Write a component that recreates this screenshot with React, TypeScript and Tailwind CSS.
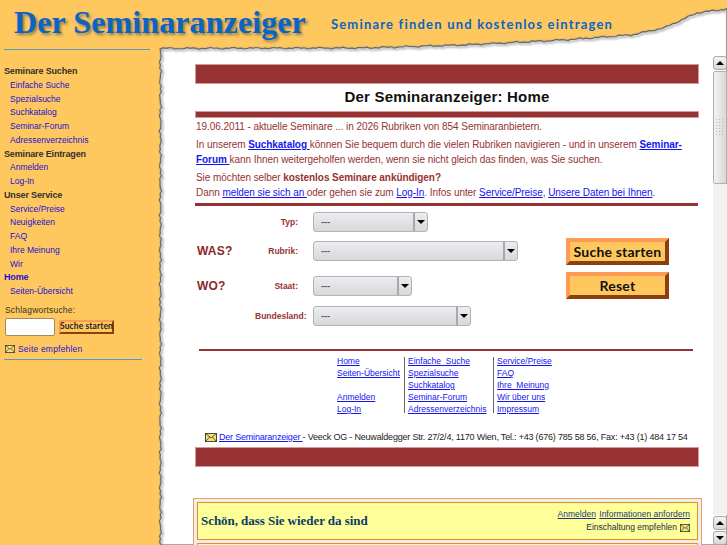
const keys: [number, number][] = [[160,48.5],[364,48],[464,45],[564,40],[631,35],[664,28],[697,13],[727,9]];

function topY(x: number) {
  for (let i = 0; i < keys.length - 1; i++) {
    const [a, b] = keys[i];
    const [c, d] = keys[i + 1];
    if (x <= c) return b + ((d - b) * (x - a)) / (c - a);
  }
  return 9;
}

function buildPath() {
  const pts: string[] = [];
  for (let y = 545; y > 49; y -= 3) {
    const n = Math.sin(y * 0.9) * 0.7 + Math.sin(y * 0.37) * 0.6;
    pts.push(`${(160.5 + n).toFixed(1)},${y}`);
  }
  for (let x = 160; x <= 727; x += 3) {
    const n = Math.sin(x * 0.8) * 0.5 + Math.sin(x * 0.29) * 0.5;
    pts.push(`${x},${(topY(x) + n).toFixed(1)}`);
  }
  pts.push("727,545");
  return "M" + pts.join(" L") + " Z";
}
const wave = buildPath();

function Envelope({ w = 12, h = 9 }: { w?: number; h?: number }) {
  return (
    <svg width={w} height={h} viewBox="0 0 13 10" preserveAspectRatio="none" className="shrink-0">
      <rect x="0.5" y="0.5" width="12" height="9" fill="#f6e27a" stroke="#3a3a2a" />
      <path d="M0.5 0.5 L6.5 5.5 L12.5 0.5 M0.5 9.5 L5 4.5 M12.5 9.5 L8 4.5" fill="none" stroke="#3a3a2a" strokeWidth="0.9" />
    </svg>
  );
}

function SideHead({ children, blue }: { children: React.ReactNode; blue?: boolean }) {
  return (
    <div className={`h-[13.75px] leading-[13.75px] pl-[4px] text-[9px] font-bold tracking-[-0.15px] ${blue ? "text-[#1c10d0]" : "text-[#33302a]"}`}>
      {children}
    </div>
  );
}

function SideLink({ children }: { children: React.ReactNode }) {
  return <div className="h-[13.75px] leading-[13.75px] pl-[10px] text-[8.5px] text-[#1c10d0]">{children}</div>;
}

function Sidebar() {
  return (
    <div className="w-[160px] shrink-0 font-['Liberation_Sans',sans-serif]">
      <div className="ml-[4px] mt-[1px] w-[146px] h-px bg-[#4f9cc0]" />
      <div className="mt-[15px]">
        <SideHead>Seminare Suchen</SideHead>
        <SideLink>Einfache Suche</SideLink>
        <SideLink>Spezialsuche</SideLink>
        <SideLink>Suchkatalog</SideLink>
        <SideLink>Seminar-Forum</SideLink>
        <SideLink>Adressenverzeichnis</SideLink>
        <SideHead>Seminare Eintragen</SideHead>
        <SideLink>Anmelden</SideLink>
        <SideLink>Log-In</SideLink>
        <SideHead>Unser Service</SideHead>
        <SideLink>Service/Preise</SideLink>
        <SideLink>Neuigkeiten</SideLink>
        <SideLink>FAQ</SideLink>
        <SideLink>Ihre Meinung</SideLink>
        <SideLink>Wir</SideLink>
        <SideHead blue>Home</SideHead>
        <SideLink>Seiten-Übersicht</SideLink>
      </div>
      <div className="mt-[5px] ml-[5px] text-[8.5px] leading-[13px] text-[#33302a] tracking-[0.2px]">Schlagwortsuche:</div>
      <div className="mt-[1px] ml-[5px] flex items-center gap-[4px]">
        <div className="w-[50px] h-[18px] bg-white rounded-[2px] border border-[#a08a60]" />
        <div className="w-[55px] h-[14px] flex items-center justify-center bg-[#ffc85f] border-2 border-t-[#ff9a55] border-l-[#ff9a55] border-r-[#8c4010] border-b-[#8c4010] text-[8.5px] font-bold font-['Lato',sans-serif] text-[#222] tracking-[0.1px] whitespace-nowrap">
          Suche starten
        </div>
      </div>
      <div className="mt-[7px] ml-[5px] flex items-center gap-[3px] text-[8.5px] leading-[12px] text-[#1c10d0] tracking-[0.2px]">
        <Envelope w={10} h={8} />
        <span>Seite empfehlen</span>
      </div>
      <div className="ml-[4px] mt-[4px] w-[138px] h-px bg-[#4f9cc0]" />
    </div>
  );
}

function Select({ width }: { width: string }) {
  return (
    <div className={`${width} h-[20px] flex rounded-[3px] border border-[#b4b4b4] bg-gradient-to-b from-[#ecedf0] to-[#d8d8dc]`}>
      <div className="flex-1 pl-[7px] text-[9px] leading-[18px] font-bold text-[#555]">---</div>
      <div className="w-[14px] border-l-2 border-[#a8a8a8] flex items-center justify-center">
        <span className="w-0 h-0 border-l-[4px] border-r-[4px] border-t-[4px] border-l-transparent border-r-transparent border-t-black" />
      </div>
    </div>
  );
}

function FormRow({ big, label, width, top }: { big?: string; label: string; width: string; top: string }) {
  return (
    <div className={`${top} flex items-center h-[20px]`}>
      <div className="w-[60px] pl-[2px] text-[12px] font-bold text-[#8a2a2a] tracking-[0.2px]">{big}</div>
      <div className="w-[43px] text-right text-[8.5px] font-bold text-[#963232] whitespace-nowrap">{label}</div>
      <div className="w-[15px]" />
      <Select width={width} />
    </div>
  );
}

function BevelButton({ children }: { children: React.ReactNode }) {
  return (
    <div className="w-[103px] h-[27px] flex items-center justify-center bg-[#ffc85f] border-[4px] border-t-[#ff9a55] border-l-[#ff9a55] border-r-[#8c4010] border-b-[#8c4010] text-[14px] font-bold font-['Lato',sans-serif] text-[#111] tracking-[0.2px]">
      {children}
    </div>
  );
}

function Lnk({ children, bold }: { children: React.ReactNode; bold?: boolean }) {
  return <a className={`text-[#1414f0] underline ${bold ? "font-bold" : ""}`}>{children}</a>;
}

function FootLink({ children }: { children?: React.ReactNode }) {
  return (
    <div className="h-[12px] leading-[12px] text-[8.5px] whitespace-nowrap text-[#1414f0] underline">{children}</div>
  );
}

function Bar({ h, mt }: { h: string; mt?: string }) {
  return <div className={`${h} ${mt ?? ""} w-[504px] bg-[#963232] border border-[#d49a9a]`} />;
}

function Main() {
  return (
    <div className="flex-1 min-w-0 pl-[35px] pt-[16px] font-['Liberation_Sans',sans-serif]">
      <Bar h="h-[20px]" />
      <div className="h-[27px] w-[504px] flex items-center justify-center text-[15px] font-bold text-[#111] tracking-[0.2px]">
        Der Seminaranzeiger: Home
      </div>
      <Bar h="h-[7px]" />
      <div className="mt-[1px] pl-[1px] w-[504px] text-[10px] leading-[15px] text-[#963232] tracking-[-0.06px] whitespace-nowrap">
        <div>19.06.2011 - aktuelle Seminare ... in 2026 Rubriken von 854 Seminaranbietern.</div>
        <div className="mt-[3px]">
          In unserem <Lnk bold>Suchkatalog </Lnk> können Sie bequem durch die vielen Rubriken navigieren - und in unserem <Lnk bold>Seminar-</Lnk>
          <br />
          <Lnk bold>Forum </Lnk> kann Ihnen weitergeholfen werden, wenn sie nicht gleich das finden, was Sie suchen.
        </div>
        <div className="mt-[3px]">
          Sie möchten selber <b>kostenlos Seminare ankündigen?</b>
          <br />
          Dann <Lnk>melden sie sich an </Lnk> oder gehen sie zum <Lnk>Log-In</Lnk>. Infos unter <Lnk>Service/Preise</Lnk>, <Lnk>Unsere Daten bei Ihnen</Lnk>.
        </div>
      </div>
      <div className="mt-[3px] w-[503px] h-[3px] bg-[#963232]" />
      <div className="flex">
        <div className="w-[371px]">
          <FormRow label="Typ:" width="w-[115px]" top="mt-[6px]" />
          <FormRow big="WAS?" label="Rubrik:" width="w-[205px]" top="mt-[9px]" />
          <FormRow big="WO?" label="Staat:" width="w-[99px]" top="mt-[15px]" />
          <FormRow label="Bundesland:" width="w-[158px]" top="mt-[10px]" />
        </div>
        <div className="pt-[32px] flex flex-col gap-[7px]">
          <BevelButton>Suche starten</BevelButton>
          <BevelButton>Reset</BevelButton>
        </div>
      </div>
      <div className="mt-[23px] ml-[4px] w-[494px] h-[2px] bg-[#963232]" />
      <div className="mt-[4px] ml-[142px] flex h-[60px]">
        <div className="w-[67px]">
          <FootLink>Home</FootLink>
          <FootLink>Seiten-Übersicht</FootLink>
          <div className="h-[12px]" />
          <FootLink>Anmelden</FootLink>
          <FootLink>Log-In</FootLink>
        </div>
        <div className="w-[4px] h-[56px] mt-[2px]">
          <div className="w-px h-full bg-[#666]" />
        </div>
        <div className="w-[85px]">
          <FootLink>Einfache_Suche</FootLink>
          <FootLink>Spezialsuche</FootLink>
          <FootLink>Suchkatalog</FootLink>
          <FootLink>Seminar-Forum</FootLink>
          <FootLink>Adressenverzeichnis</FootLink>
        </div>
        <div className="w-[4px] h-[56px] mt-[2px]">
          <div className="w-px h-full bg-[#666]" />
        </div>
        <div>
          <FootLink>Service/Preise</FootLink>
          <FootLink>FAQ</FootLink>
          <FootLink>Ihre_Meinung</FootLink>
          <FootLink>Wir über uns</FootLink>
          <FootLink>Impressum</FootLink>
        </div>
      </div>
      <div className="mt-[16px] ml-[10px] flex items-center gap-[2px] text-[9px] leading-[12px] text-[#222] whitespace-nowrap tracking-[-0.2px]">
        <Envelope />
        <span>
          <Lnk>Der Seminaranzeiger </Lnk> - Veeck OG - Neuwaldegger Str. 27/2/4, 1170 Wien, Tel.: +43 (676) 785 58 56, Fax: +43 (1) 484 17 54
        </span>
      </div>
      <div className="mt-[4px]">
        <Bar h="h-[20px]" />
      </div>
      <div className="mt-[31px] -ml-[2px] w-[509px] border border-[#e8a060] p-[3px] pb-[3px] bg-[#eeeeee]">
        <div className="h-[38px] bg-[#ffff99] border border-[#e88a30] flex items-center justify-between pl-[3px] pr-[7px]">
          <span className="font-['Liberation_Serif',serif] font-bold text-[13px] text-[#0a3a6a] tracking-[-0.05px]">Schön, dass Sie wieder da sind</span>
          <div className="text-[8.5px] leading-[13px] text-right text-[#1a3a80]">
            <div><span className="underline">Anmelden</span> <span className="underline ml-[1px]">Informationen anfordern</span></div>
            <div className="flex items-center justify-end gap-[3px] text-[#1a2a50]">Einschaltung empfehlen <Envelope w={10} h={8} /></div>
          </div>
        </div>
        <div className="mt-[3px] h-[20px] bg-[#ffff99] border border-[#e88a30]" />
      </div>
    </div>
  );
}

function ScrollBtn({ up }: { up?: boolean }) {
  return (
    <div className="h-[14px] rounded-[3px] border border-[#a8a8a8] bg-gradient-to-b from-[#f4f4f4] to-[#d8d8d8] flex items-center justify-center">
      <span className={`w-0 h-0 border-l-[4px] border-r-[4px] border-l-transparent border-r-transparent ${up ? "border-b-[4px] border-b-black" : "border-t-[4px] border-t-black"}`} />
    </div>
  );
}

function Scrollbar() {
  return (
    <div className="w-[14px] shrink-0 mt-[8px] flex flex-col">
      <ScrollBtn up />
      <div className="h-[113px] mt-[1px] rounded-[2px] border border-[#b0b0b0] bg-gradient-to-r from-[#f2f2f2] to-[#d8d8d8] flex items-center justify-center">
        <svg width="10" height="18" viewBox="0 0 10 18">
          {[0, 3, 6, 9, 12, 15].flatMap((y) =>
            [1, 4, 7].map((x) => <rect key={`${x}-${y}`} x={x} y={y} width="1" height="1" fill="#b8b8b8" />)
          )}
        </svg>
      </div>
      <div className="flex-1 bg-[#f1f1f1]" />
      <div className="mt-[1px]"><ScrollBtn up /></div>
      <div className="mt-[1px]"><ScrollBtn /></div>
    </div>
  );
}

export default function App() {
  return (
    <div className="relative w-[727px] h-[545px] overflow-hidden bg-[#ffc85f]">
      <svg className="absolute inset-0" width="727" height="545" viewBox="0 0 727 545">
        <defs>
          <filter id="blur"><feGaussianBlur stdDeviation="1.2" /></filter>
        </defs>
        <path d={wave} fill="#888" filter="url(#blur)" />
        <path d={wave} fill="#ffffff" stroke="#5c5c5c" strokeWidth="1.2" />
        <path d={wave} fill="none" stroke="#999" strokeWidth="1.5" filter="url(#blur)" transform="translate(1.5,1.5)" />
      </svg>
      <div className="relative flex flex-col h-full">
        <div className="h-[48px] flex items-start shrink-0 pl-[14px] pt-[3px]">
          <span className="font-['Liberation_Serif',serif] font-bold text-[32px] leading-[38px] text-[#0a64c4] [text-shadow:2px_2px_3px_#8a7a50] tracking-[0.1px] whitespace-nowrap">
            Der Seminaranzeiger
          </span>
          <span className="ml-[25px] mt-[11px] font-['Lato',sans-serif] font-bold text-[13px] leading-[20px] text-[#0a64c4] tracking-[1.2px] whitespace-nowrap">
            Seminare finden und kostenlos eintragen
          </span>
        </div>
        <div className="flex flex-1 min-h-0">
          <Sidebar />
          <Main />
          <Scrollbar />
        </div>
      </div>
    </div>
  );
}
